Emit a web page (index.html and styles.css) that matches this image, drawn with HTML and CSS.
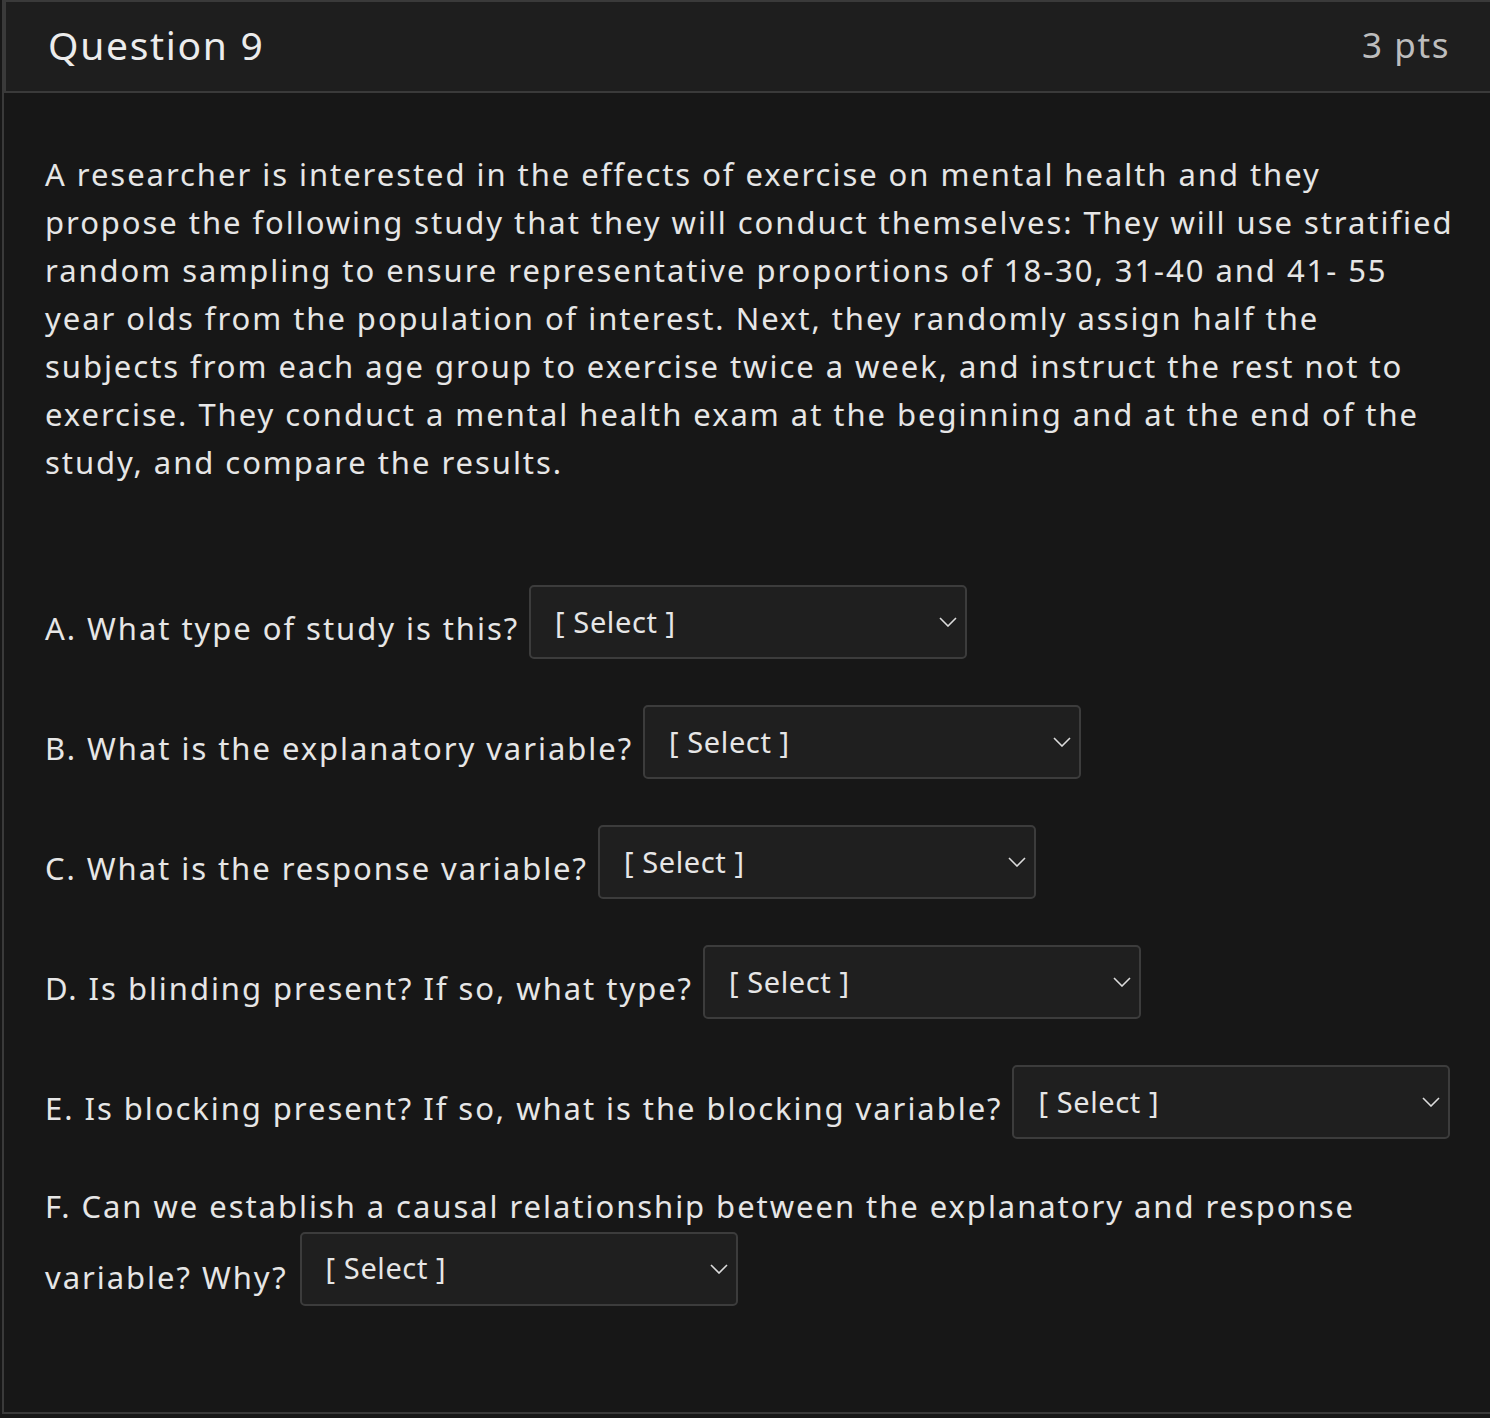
FILE: index.html
```html
<!DOCTYPE html>
<html lang="en">
<head>
<meta charset="utf-8">
<title>Question 9</title>
<link rel="stylesheet" href="styles.css">
</head>
<body>
<div class="question">
  <div class="q-header">
    <h2 class="q-title">Question 9</h2>
    <span class="q-points">3 pts</span>
  </div>
  <div class="q-body">
    <p class="q-text">A researcher is interested in the effects of exercise on mental health and they propose the following study that they will conduct themselves: They will use stratified random sampling to ensure representative proportions of 18-30, 31-40 and 41- 55 year olds from the population of interest. Next, they randomly assign half the subjects from each age group to exercise twice a week, and instruct the rest not to exercise. They conduct a mental health exam at the beginning and at the end of the study, and compare the results.</p>

    <div class="q-row">
      <span class="q-label">A. What type of study is this?</span>
      <div class="select"><span class="select-text">[ Select ]</span><svg class="chev" width="18" height="10" viewBox="0 0 18 10"><path d="M1 1 L9 9 L17 1" fill="none" stroke="#dcdcdc" stroke-width="1.6"/></svg></div>
    </div>
    <div class="q-row">
      <span class="q-label">B. What is the explanatory variable?</span>
      <div class="select"><span class="select-text">[ Select ]</span><svg class="chev" width="18" height="10" viewBox="0 0 18 10"><path d="M1 1 L9 9 L17 1" fill="none" stroke="#dcdcdc" stroke-width="1.6"/></svg></div>
    </div>
    <div class="q-row">
      <span class="q-label">C. What is the response variable?</span>
      <div class="select"><span class="select-text">[ Select ]</span><svg class="chev" width="18" height="10" viewBox="0 0 18 10"><path d="M1 1 L9 9 L17 1" fill="none" stroke="#dcdcdc" stroke-width="1.6"/></svg></div>
    </div>
    <div class="q-row">
      <span class="q-label">D. Is blinding present? If so, what type?</span>
      <div class="select"><span class="select-text">[ Select ]</span><svg class="chev" width="18" height="10" viewBox="0 0 18 10"><path d="M1 1 L9 9 L17 1" fill="none" stroke="#dcdcdc" stroke-width="1.6"/></svg></div>
    </div>
    <div class="q-row">
      <span class="q-label">E. Is blocking present? If so, what is the blocking variable?</span>
      <div class="select"><span class="select-text">[ Select ]</span><svg class="chev" width="18" height="10" viewBox="0 0 18 10"><path d="M1 1 L9 9 L17 1" fill="none" stroke="#dcdcdc" stroke-width="1.6"/></svg></div>
    </div>
    <p class="q-last">F. Can we establish a causal relationship between the explanatory and response variable? Why? <span class="select select-inline"><span class="select-text">[ Select ]</span><svg class="chev" width="18" height="10" viewBox="0 0 18 10"><path d="M1 1 L9 9 L17 1" fill="none" stroke="#dcdcdc" stroke-width="1.6"/></svg></span></p>
  </div>
</div>
</body>
</html>
```

FILE: styles.css
```css
html, body {
  margin: 0;
  padding: 0;
  background: #171717;
}
body {
  font-family: "Noto Sans", "Open Sans", sans-serif;
  color: #e6e6e6;
}
.question {
  margin-left: 2px;
  border-left: 2px solid #3a3a3a;
  border-bottom: 2px solid #3a3a3a;
  background: #171717;
  height: 1414px;
  box-sizing: border-box;
}
.q-header {
  display: flex;
  justify-content: space-between;
  align-items: center;
  height: 93px;
  box-sizing: border-box;
  background: #1e1e1e;
  border-top: 2px solid #3a3a3a;
  border-bottom: 2px solid #3a3a3a;
  border-left: 2px solid #3a3a3a;
  padding: 0 40px 5px 42px;
}
.q-title {
  margin: 0;
  font-size: 39px;
  font-weight: 400;
  letter-spacing: 1.7px;
  color: #ececec;
}
.q-points {
  font-size: 35px;
  letter-spacing: 1.6px;
  color: #bdbdbd;
}
.q-body {
  padding: 57px 32px 0 41px;
}
.q-text {
  margin: 0 0 99px;
  font-size: 31px;
  letter-spacing: 1.95px;
  line-height: 48px;
}
.q-row {
  display: flex;
  align-items: center;
  margin-bottom: 46px;
}
.q-label {
  flex-shrink: 0;
  white-space: nowrap;
  font-size: 31px;
  letter-spacing: 1.95px;
  margin-top: 12px;
  margin-right: 10px;
}
.select {
  display: flex;
  align-items: center;
  flex-shrink: 0;
  width: 438px;
  height: 74px;
  box-sizing: border-box;
  background: #1f1f1f;
  border: 2px solid #3c3c3c;
  border-radius: 5px;
  padding: 0 8px 0 24px;
}
.select-text {
  font-size: 29px;
  letter-spacing: 0.6px;
  color: #e6e6e6;
  margin-top: -2px;
}
.chev {
  margin-left: auto;
}
.select-inline {
  display: inline-flex;
  vertical-align: 10px;
  margin: -24px 0 -24px 2px;
}
.q-last {
  margin: -14px 0 0;
  font-size: 31px;
  letter-spacing: 1.95px;
  line-height: 71px;
}
```
